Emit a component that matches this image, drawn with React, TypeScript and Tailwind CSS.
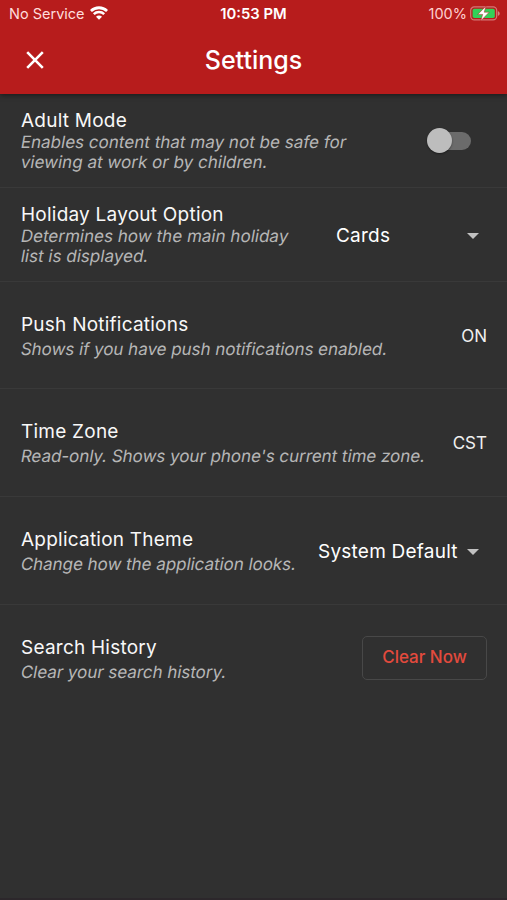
import React from 'react';

interface SettingRowProps {
  title: string;
  lines: string[];
  className: string;
  compact?: boolean;
  children: React.ReactNode;
}

const WifiIcon: React.FC = () => (
  <svg className="w-[18px] h-[14px] -mt-[2px]" viewBox="0 0 18 14" fill="none" stroke="#fff">
    <path d="M0.9 5a11.7 11.7 0 0 1 16.2 0" strokeWidth="2.8" />
    <path d="M3.8 8.2a7.5 7.5 0 0 1 10.4 0" strokeWidth="2.5" />
    <path d="M9 13.8 6 10.8a4.2 4.2 0 0 1 6 0Z" fill="#fff" stroke="none" />
  </svg>
);

const BatteryIcon: React.FC = () => (
  <svg className="w-[30px] h-[15px] -mt-[2px]" viewBox="0 0 30 15">
    <rect x="0.7" y="0.9" width="26" height="13" rx="3.6" fill="none" stroke="#fff" strokeOpacity="0.4" strokeWidth="1.2" />
    <path d="M27.9 5.2c2.4 .6 2.4 4 0 4.6Z" fill="#fff" fillOpacity="0.45" />
    <rect x="2.6" y="2.8" width="22.2" height="9.2" rx="1.8" fill="#32d158" />
    <path d="M15.9 0.2 7.8 8.4h4.9l-1.9 6.4 8.4-8.6h-5Z" fill="#fff" stroke="#b71c1c" strokeWidth="0.5" />
  </svg>
);

const CloseIcon: React.FC = () => (
  <svg className="w-[18px] h-[18px]" viewBox="0 0 18 18" stroke="#fff" strokeWidth="2.6">
    <path d="M1.2 1.2 16.8 16.8M16.8 1.2 1.2 16.8" />
  </svg>
);

const Caret: React.FC = () => (
  <svg className="w-[12px] h-[6px] shrink-0" viewBox="0 0 12 6">
    <path d="M0 0h12L6 6Z" fill="#c1c1c1" />
  </svg>
);

const SettingRow: React.FC<SettingRowProps> = ({ title, lines, className, compact, children }) => (
  <section className={`${className} flex items-center justify-between border-b border-[#393939] pt-[2px] pl-[21px] pr-5`}>
    <div className={compact ? '-mt-[1px] tracking-[0.02px]' : 'space-y-[3px] tracking-[-0.04px]'}>
      <h2 className="text-[19px] leading-[22px] tracking-[0.23px] text-[#f8f8f8] whitespace-nowrap">{title}</h2>
      {/* slanted upright face, keeps the two-storey "a" */}
      <p className="text-[17px] leading-[20px] text-[#b6b6b6] whitespace-nowrap">
        {lines.map((line) => (
          <span key={line} className="block w-max -skew-x-[10deg]">{line}</span>
        ))}
      </p>
    </div>
    {children}
  </section>
);

const App: React.FC = () => {
  return (
    <div className="w-full h-[900px] overflow-hidden bg-[#303030] border-b-2 border-[#2c272b] font-['Inter',sans-serif]">
      <header className="relative h-[94px] bg-[#b71c1c] text-white shadow-[0_1px_5px_rgba(0,0,0,0.5)]">
        <div className="grid grid-cols-3 items-center h-[28px] pl-[9px] pr-[7px] text-[14.5px]">
          <div className="flex items-center gap-[5px] text-[#ffdcdc]">
            <span>No Service</span>
            <WifiIcon />
          </div>
          <span className="-ml-[2px] text-center text-[14.8px] font-semibold">10:53 PM</span>
          <div className="flex items-center justify-end gap-[3px] text-[#ffd0d0]">
            <span>100%</span>
            <BatteryIcon />
          </div>
        </div>
        <div className="grid grid-cols-[1fr_auto_1fr] items-center h-[64px] px-[26px]">
          <button aria-label="Close">
            <CloseIcon />
          </button>
          <h1 className="text-[25px] leading-8 font-medium">Settings</h1>
        </div>
      </header>

      <main>
        <SettingRow
          title="Adult Mode"
          lines={['Enables content that may not be safe for', 'viewing at work or by children.']}
          className="h-[94px]"
          compact
        >
          <div className="flex items-center w-[44px] mr-4 -mt-[2px]">
            <span className="relative z-10 w-[25px] h-[25px] shrink-0 rounded-full bg-[#bdbdbd] shadow-[0_1px_2px_rgba(0,0,0,0.4)]" />
            <span className="w-[38px] h-[18px] -ml-[19px] rounded-full bg-[#6b6b6b]" />
          </div>
        </SettingRow>
        <SettingRow
          title="Holiday Layout Option"
          lines={['Determines how the main holiday', 'list is displayed.']}
          className="h-[94px]"
          compact
        >
          <div className="flex items-center justify-between w-[143px] mr-2 pt-[1px] text-[19px] tracking-[0.23px] text-white">
            <span>Cards</span>
            <Caret />
          </div>
        </SettingRow>
        <SettingRow
          title="Push Notifications"
          lines={['Shows if you have push notifications enabled.']}
          className="h-[107px]"
        >
          <span className="pt-[1px] text-[17px] text-[#f0f0f0]">ON</span>
        </SettingRow>
        <SettingRow
          title="Time Zone"
          lines={["Read-only. Shows your phone's current time zone."]}
          className="h-[108px]"
        >
          <span className="text-[17px] text-[#f0f0f0]">CST</span>
        </SettingRow>
        <SettingRow title="Application Theme" lines={['Change how the application looks.']} className="h-[108px]">
          <div className="flex items-center justify-between w-[161px] mr-2 text-[19px] tracking-[0.23px] text-white">
            <span className="pt-[1px] whitespace-nowrap">System Default</span>
            <Caret />
          </div>
        </SettingRow>
        <SettingRow
          title="Search History"
          lines={['Clear your search history.']}
          className="h-[107px] border-transparent"
        >
          <button className="w-[125px] h-[44px] -mt-[2px] rounded-[5px] border border-[#484848] text-[17px] font-medium text-[#e34a3d]">
            Clear Now
          </button>
        </SettingRow>
      </main>
    </div>
  );
};

export default App;
